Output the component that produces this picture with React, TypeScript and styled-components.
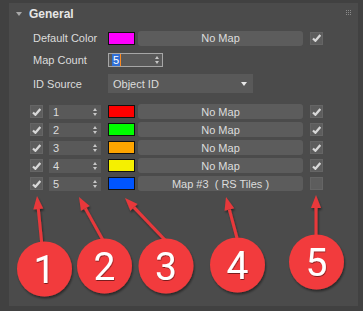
import React from "react";
import styled, { createGlobalStyle } from "styled-components";

const Global = createGlobalStyle`
  html, body { margin: 0; padding: 0; background: #414141; }
  body { font-family: "Liberation Sans", Arial, sans-serif; }
`;

const Frame = styled.div`
  position: relative;
  width: 363px;
  height: 311px;
  box-sizing: border-box;
  padding: 3px 5px 5px 9px;
  background: #414141;
  overflow: hidden;
`;

const Panel = styled.div`
  height: 100%;
  background: #4b4b4b;
  display: flex;
  flex-direction: column;
  position: relative;
`;

const Header = styled.div`
  height: 22px;
  display: flex;
  align-items: center;
  padding-left: 7px;
  gap: 7px;
  color: #e6e6e6;
  font-size: 12px;
  font-weight: bold;
`;

const Tri = styled.span`
  width: 0;
  height: 0;
  border-left: 3px solid transparent;
  border-right: 3px solid transparent;
  border-top: 4px solid #a8a8a8;
`;

const Grip = styled.div`
  position: absolute;
  right: 7px;
  top: 7px;
  display: grid;
  grid-template-columns: repeat(3, 1px);
  gap: 1px;
  & > i { width: 1px; height: 1px; background: #8a8a8a; }
`;

const FieldRow = styled.div<{ $mt: number; $h: number }>`
  display: flex;
  align-items: center;
  height: ${(p) => p.$h}px;
  margin-top: ${(p) => p.$mt}px;
  padding-left: 24px;
`;

const Label = styled.div`
  width: 75px;
  color: #dcdcdc;
  font-size: 11px;
`;

const Swatch = styled.div<{ $c: string; $ml?: number }>`
  width: 27px;
  height: 13px;
  margin-left: ${(p) => p.$ml ?? 0}px;
  box-sizing: border-box;
  border: 1px solid #111;
  background: ${(p) => p.$c};
  flex: none;
`;

const MapButton = styled.div`
  margin-left: 3px;
  width: 165px;
  height: 15px;
  box-sizing: border-box;
  background: #5c5c5c;
  border-radius: 3px;
  color: #dcdcdc;
  font-size: 11px;
  display: flex;
  align-items: center;
  justify-content: center;
  white-space: pre;
  flex: none;
`;

const Check = styled.div<{ $ml: number }>`
  margin-left: ${(p) => p.$ml}px;
  width: 13px;
  height: 13px;
  box-sizing: border-box;
  background: #5d5d5d;
  border: 1px solid #656565;
  display: flex;
  align-items: center;
  justify-content: center;
  flex: none;
`;

const Spinner = styled.div<{ $w: number; $focus?: boolean; $ml?: number }>`
  width: ${(p) => p.$w}px;
  height: 14px;
  margin-left: ${(p) => p.$ml ?? 0}px;
  box-sizing: border-box;
  background: #595959;
  border: 1px solid ${(p) => (p.$focus ? "#a6a6a6" : "#595959")};
  display: flex;
  align-items: center;
  padding-left: 3px;
  color: #dcdcdc;
  font-size: 11px;
  position: relative;
  flex: none;
`;

const Sel = styled.span`
  background: #2f6fd6;
  color: #fff;
  padding: 0 1px;
  border-right: 1px solid #ff8a1f;
`;

const Arrows = styled.div`
  position: absolute;
  right: 3px;
  top: 50%;
  transform: translateY(-50%);
  display: flex;
  flex-direction: column;
  gap: 2px;
`;

const Up = styled.span`
  width: 0; height: 0;
  border-left: 2px solid transparent;
  border-right: 2px solid transparent;
  border-bottom: 3px solid #c8c8c8;
`;

const Down = styled.span`
  width: 0; height: 0;
  border-left: 2px solid transparent;
  border-right: 2px solid transparent;
  border-top: 3px solid #c8c8c8;
`;

const Dropdown = styled.div`
  width: 145px;
  height: 19px;
  box-sizing: border-box;
  background: #595959;
  display: flex;
  align-items: center;
  justify-content: space-between;
  padding: 0 6px 0 5px;
  color: #dcdcdc;
  font-size: 11px;
`;

const DropTri = styled.span`
  width: 0; height: 0;
  border-left: 3px solid transparent;
  border-right: 3px solid transparent;
  border-top: 4px solid #e8e8e8;
`;

const List = styled.div`
  margin-top: 11px;
  display: flex;
  flex-direction: column;
  gap: 3px;
`;

const ListRow = styled.div`
  display: flex;
  align-items: center;
  height: 15px;
  padding-left: 21px;
`;

const Overlay = styled.svg`
  position: absolute;
  left: 0;
  top: 0;
  pointer-events: none;
`;

const CheckMark = () => (
  <svg width="9" height="8" viewBox="0 0 9 8">
    <path d="M1 4.5 L3.4 6.8 L8.3 1" fill="none" stroke="#d8d8d8" strokeWidth="2.2" />
  </svg>
);

const SpinArrows = () => (
  <Arrows>
    <Up />
    <Down />
  </Arrows>
);

const rows = [
  { n: "1", c: "#ff0000", label: "No Map", on: true },
  { n: "2", c: "#00ff00", label: "No Map", on: true },
  { n: "3", c: "#ffa500", label: "No Map", on: true },
  { n: "4", c: "#f5f000", label: "No Map", on: true },
  { n: "5", c: "#0055ff", label: "Map #3  ( RS Tiles )", on: false },
];

const arrows = [
  { x1: 42, y1: 246, x2: 37, y2: 196 },
  { x1: 104, y1: 242, x2: 79, y2: 197 },
  { x1: 166, y1: 241, x2: 125, y2: 198 },
  { x1: 237, y1: 238, x2: 226, y2: 197 },
  { x1: 316, y1: 236, x2: 316, y2: 195 },
];

const circles = [
  { cx: 44.5, cy: 269, n: "1" },
  { cx: 104.5, cy: 266, n: "2" },
  { cx: 166, cy: 266, n: "3" },
  { cx: 237.5, cy: 265, n: "4" },
  { cx: 316.5, cy: 262, n: "5" },
];

function Arrow({ x1, y1, x2, y2 }: { x1: number; y1: number; x2: number; y2: number }) {
  const dx = x2 - x1;
  const dy = y2 - y1;
  const len = Math.hypot(dx, dy);
  const ux = dx / len;
  const uy = dy / len;
  const head = 13;
  const bx = x2 - ux * head;
  const by = y2 - uy * head;
  const px = -uy * 5;
  const py = ux * 5;
  return (
    <g filter="url(#sh)">
      <line x1={x1} y1={y1} x2={bx} y2={by} stroke="#e8393b" strokeWidth="3" />
      <polygon
        points={`${x2},${y2} ${bx + px},${by + py} ${bx - px},${by - py}`}
        fill="#e8393b"
      />
    </g>
  );
}

export default function App() {
  return (
    <>
      <Global />
      <Frame>
        <Panel>
          <Grip>
            {Array.from({ length: 9 }).map((_, i) => (
              <i key={i} />
            ))}
          </Grip>
          <Header>
            <Tri />
            General
          </Header>
          <FieldRow $mt={6} $h={14}>
            <Label>Default Color</Label>
            <Swatch $c="#ff00ff" />
            <MapButton>No Map</MapButton>
            <Check $ml={7}>
              <CheckMark />
            </Check>
          </FieldRow>
          <FieldRow $mt={8} $h={14}>
            <Label>Map Count</Label>
            <Spinner $w={55} $focus>
              <Sel>5</Sel>
              <SpinArrows />
            </Spinner>
          </FieldRow>
          <FieldRow $mt={7} $h={19}>
            <Label>ID Source</Label>
            <Dropdown>
              Object ID
              <DropTri />
            </Dropdown>
          </FieldRow>
          <List>
            {rows.map((r) => (
              <ListRow key={r.n}>
                <Check $ml={0}>
                  <CheckMark />
                </Check>
                <Spinner $w={52} $ml={6}>
                  {r.n}
                  <SpinArrows />
                </Spinner>
                <Swatch $c={r.c} $ml={7} />
                <MapButton>{r.label}</MapButton>
                <Check $ml={7}>{r.on && <CheckMark />}</Check>
              </ListRow>
            ))}
          </List>
        </Panel>
        <Overlay width="363" height="311" viewBox="0 0 363 311">
          <defs>
            <filter id="sh" x="-30%" y="-30%" width="160%" height="160%">
              <feDropShadow dx="1" dy="2" stdDeviation="1.2" floodColor="#000" floodOpacity="0.45" />
            </filter>
            <filter id="ts" x="-30%" y="-30%" width="160%" height="160%">
              <feDropShadow dx="0.5" dy="1" stdDeviation="0.6" floodColor="#000" floodOpacity="0.5" />
            </filter>
          </defs>
          {arrows.map((a, i) => (
            <Arrow key={i} {...a} />
          ))}
          {circles.map((c) => (
            <g key={c.n}>
              <circle cx={c.cx} cy={c.cy} r="27.5" fill="#f23b3c" filter="url(#sh)" />
              <text
                x={c.cx}
                y={c.cy + 14}
                textAnchor="middle"
                fill="#ffffff"
                fontFamily="Roboto, 'Liberation Sans', sans-serif"
                fontSize="39"
                filter="url(#ts)"
              >
                {c.n}
              </text>
            </g>
          ))}
        </Overlay>
      </Frame>
    </>
  );
}
